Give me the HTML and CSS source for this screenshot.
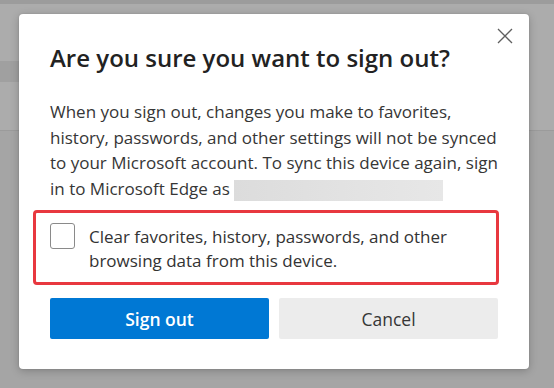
FILE: index.html
```html
<!DOCTYPE html>
<html lang="en">
<head>
<meta charset="utf-8">
<title>Sign out</title>
<link rel="stylesheet" href="styles.css">
</head>
<body>
<div class="page">
  <div class="page-top"></div>
  <div class="page-band"><div class="page-tab"></div></div>
  <div class="page-rest"></div>
</div>

<div class="dialog" role="dialog" aria-labelledby="dlg-title">
  <button class="close" aria-label="Close">
    <svg width="16" height="16" viewBox="0 0 16 16"><path d="M1 1 L15 15 M15 1 L1 15" stroke="#5f5f5f" stroke-width="1.3" fill="none"/></svg>
  </button>
  <h1 id="dlg-title" class="title">Are you sure you want to sign out?</h1>
  <p class="message">When you sign out, changes you make to favorites,<br>history, passwords, and other settings will not be synced<br>to your Microsoft account. To sync this device again, sign<br>in to Microsoft Edge as <span class="redacted"></span></p>
  <label class="clear-option">
    <span class="checkbox"></span>
    <span class="clear-label">Clear favorites, history, passwords, and other<br>browsing data from this device.</span>
  </label>
  <div class="actions">
    <button class="btn btn-primary">Sign out</button>
    <button class="btn btn-secondary">Cancel</button>
  </div>
</div>
</body>
</html>
```

FILE: styles.css
```css
* { box-sizing: border-box; }

html, body {
  margin: 0;
  padding: 0;
}

body {
  width: 554px;
  height: 388px;
  overflow: hidden;
  background: #a5a5a5;
  font-family: "Open Sans", "Noto Sans", sans-serif;
  position: relative;
}

.page-top {
  height: 4px;
  background: #9c9c9c;
}

.page-band {
  height: 127px;
  background: #acacac;
  border-bottom: 1px solid #9b9b9b;
  padding-top: 57px;
}

.page-tab {
  width: 19px;
  height: 21px;
  background: #a0a0a0;
}

.dialog {
  position: absolute;
  left: 19px;
  top: 14px;
  width: 510px;
  background: #ffffff;
  border-radius: 4px;
  box-shadow: 0 2px 8px rgba(0, 0, 0, 0.22), 0 0 2px rgba(0, 0, 0, 0.12);
  padding: 28.6px 31px 30px 31px;
}

.close {
  position: absolute;
  left: 478px;
  top: 14px;
  width: 16px;
  height: 16px;
  padding: 0;
  border: 0;
  background: none;
  display: flex;
}

.title {
  margin: 0;
  font-size: 24px;
  line-height: 30px;
  font-weight: 600;
  color: #222222;
  white-space: nowrap;
}

.message {
  margin: 26.6px 0 0 0;
  font-size: 17px;
  line-height: 25.6px;
  color: #363636;
  white-space: nowrap;
}

.redacted {
  display: inline-block;
  width: 209px;
  height: 21px;
  vertical-align: -6px;
  background: linear-gradient(90deg, #dcdcdc, #e3e3e3 60%, #e7e7e7);
}

.clear-option {
  display: flex;
  align-items: flex-start;
  gap: 14px;
  margin: 8px -1px 0 -17px;
  padding: 10px 14px 9px 14px;
  border: 3px solid #e8383f;
  border-radius: 4px;
}

.checkbox {
  flex: none;
  width: 25px;
  height: 26px;
  border: 1px solid #8a8a8a;
  border-radius: 3px;
  background: #fff;
}

.clear-label {
  margin-top: 2.6px;
  font-size: 17px;
  line-height: 24px;
  color: #333333;
  white-space: nowrap;
}

.actions {
  display: grid;
  grid-template-columns: 1fr 1fr;
  gap: 10px;
  margin-top: 13px;
}

.btn {
  height: 41px;
  border: 0;
  border-radius: 2px;
  font-family: inherit;
  font-size: 17.5px;
  font-weight: 600;
  padding: 0;
}

.btn-primary {
  background: #0078d4;
  color: #ffffff;
}

.btn-secondary {
  background: #ececec;
  color: #363636;
  font-weight: 500;
}
```
